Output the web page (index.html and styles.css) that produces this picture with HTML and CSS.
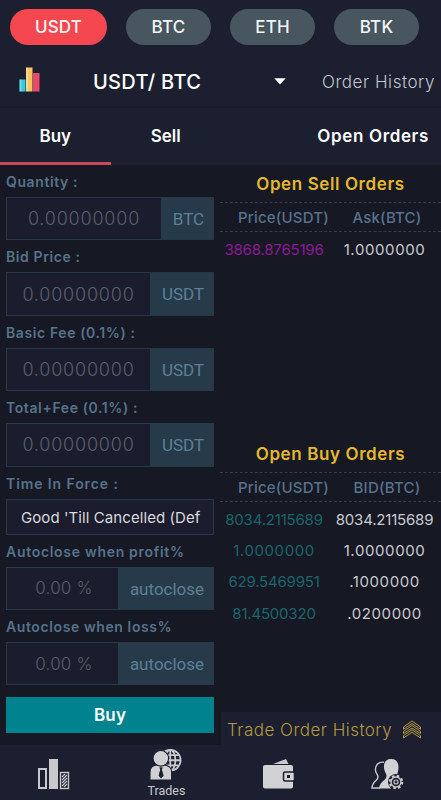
FILE: index.html
```
<!DOCTYPE html>
<html lang="en">
<head>
    <meta charset="UTF-8">
    <meta name="viewport" content="width=device-width, initial-scale=1.0">
    <title>Trade USDT/BTC</title>
    <link rel="stylesheet" href="styles.css">
</head>
<body>
    <header class="top">
        <div class="coins">
            <button class="coin active">USDT</button>
            <button class="coin">BTC</button>
            <button class="coin">ETH</button>
            <button class="coin">BTK</button>
        </div>
        <div class="pair-bar">
            <svg class="chart-icon" width="22" height="25" viewBox="0 0 22 25">
                <rect x="0.5" y="12.5" width="6" height="12" fill="#35cbe4"/>
                <rect x="7" y="0.5" width="6.5" height="24" fill="#f8c561"/>
                <rect x="14" y="6" width="6.5" height="18.5" fill="#e84a6c"/>
                <path d="M0.5 12.5h2v12h-2zM7 .5h2v24H7z" fill="#fff" opacity=".3"/>
            </svg>
            <span class="pair">USDT/ BTC</span>
            <svg class="caret" width="12" height="7" viewBox="0 0 12 7"><path d="M0.3 0.3h11.4L6 6.5z" fill="#fff"/></svg>
            <a class="history-link">Order History</a>
        </div>
    </header>

    <nav class="tabs">
        <a class="tab active">Buy</a>
        <a class="tab">Sell</a>
        <a class="tab-orders">Open Orders</a>
    </nav>

    <main class="content">
        <form class="trade-form">
            <label for="quantity">Quantity :</label>
            <div class="field">
                <input type="text" id="quantity" placeholder="0.00000000">
                <span class="unit unit-btc">BTC</span>
            </div>

            <label for="bidPrice">Bid Price :</label>
            <div class="field">
                <input type="text" id="bidPrice" placeholder="0.00000000">
                <span class="unit">USDT</span>
            </div>

            <label for="basicFee">Basic Fee (0.1%) :</label>
            <div class="field">
                <input type="text" id="basicFee" placeholder="0.00000000">
                <span class="unit">USDT</span>
            </div>

            <label for="totalFee">Total+Fee (0.1%) :</label>
            <div class="field">
                <input type="text" id="totalFee" placeholder="0.00000000">
                <span class="unit">USDT</span>
            </div>

            <label class="wide">Time In Force :</label>
            <div class="select">Good 'Till Cancelled (Def</div>

            <label class="auto" for="profit">Autoclose when profit%</label>
            <div class="field percent">
                <input type="text" id="profit" placeholder="0.00 %">
                <span class="unit unit-auto">autoclose</span>
            </div>

            <label for="loss">Autoclose when loss%</label>
            <div class="field percent">
                <input type="text" id="loss" placeholder="0.00 %">
                <span class="unit unit-auto">autoclose</span>
            </div>

            <button type="button" class="buy-btn">Buy</button>
        </form>

        <section class="orders">
            <div class="book sell-book">
                <h2>Open Sell Orders</h2>
                <div class="row head"><span>Price(USDT)</span><span>Ask(BTC)</span></div>
                <div class="row"><span class="price">3868.8765196</span><span class="round">1.0000000</span></div>
            </div>
            <div class="book buy-book">
                <h2>Open Buy Orders</h2>
                <div class="row head"><span>Price(USDT)</span><span>BID(BTC)</span></div>
                <div class="row"><span class="price">8034.2115689</span><span>8034.2115689</span></div>
                <div class="row"><span class="price round">1.0000000</span><span class="round">1.0000000</span></div>
                <div class="row"><span class="price">629.5469951</span><span class="round">.1000000</span></div>
                <div class="row"><span class="price">81.4500320</span><span class="round">.0200000</span></div>
            </div>
            <div class="trade-history">
                <span>Trade Order History</span>
                <svg width="20" height="20" viewBox="0 0 20 20" fill="none" stroke="#b59a3e">
                    <path d="M1.5 9.2V7L10 1l8.5 6v2.2L10 3.5z"/>
                    <path d="M1.5 13.5v-2.2L10 5.5l8.5 5.8v2.2L10 8z"/>
                    <path d="M1.5 18v-2.4L10 9.8l8.5 5.8V18L10 12.2z"/>
                </svg>
            </div>
        </section>
    </main>

    <footer class="bottom-nav">
        <a class="nav-item chart">
            <svg width="33" height="32" viewBox="0 0 33 32">
                <rect x="2" y="11" width="7" height="19" fill="none" stroke="#c9c9cd" stroke-width="2"/>
                <rect x="12" y="1" width="9" height="30" fill="#c9c9cd"/>
                <rect x="23.5" y="14.5" width="8" height="16" fill="none" stroke="#c9c9cd" stroke-width="1.4"/>
                <path d="M25 19l3-3M25 22l5-5M25 25l5-5M25 28l5-5M27 29l3-3" stroke="#c9c9cd" stroke-width="1.2"/>
            </svg>
        </a>
        <a class="nav-item trades">
            <svg width="32" height="32" viewBox="0 0 34 33">
                <g fill="none" stroke="#c9c9cd" stroke-width="1.9">
                    <circle cx="21.5" cy="12.5" r="11"/>
                    <ellipse cx="21.5" cy="12.5" rx="5.5" ry="11"/>
                    <path d="M21.5 1.5v22M10.5 12.5h22M12.5 7h18M12.5 18h18"/>
                </g>
                <g fill="#d0d0d4" stroke="#1c1f30" stroke-width="1.2">
                    <path d="M0 33.5V25c0-5 3-7 7-7.5h8c4 .5 8 2.5 8 7.5v8.500z"/>
                    <circle cx="11.5" cy="10.5" r="8.3"/>
                </g>
                <path d="M10 20h3.500l-.8 2.500 1.800 6.500-2.700 3-2.700-3 1.700-6.500z" fill="#1c1f30"/>
            </svg>
            <span>Trades</span>
        </a>
        <a class="nav-item wallet">
            <svg width="33" height="31" viewBox="0 0 33 31">
                <path d="M11 6l13-5 2.5 5z" fill="#c9c9cd"/>
                <rect x="1" y="7" width="30" height="23.5" rx="2" fill="#d2d2d5"/>
                <rect x="21.5" y="14" width="11" height="9" rx="1.5" fill="#d2d2d5" stroke="#1c1f30" stroke-width="1.5"/>
                <rect x="25" y="17" width="3" height="3" fill="#1c1f30"/>
            </svg>
        </a>
        <a class="nav-item account">
            <svg width="33" height="32" viewBox="0 0 33 32">
                <path d="M13 4.2C7 3.5 4 7.5 4.5 12.5c.3 3 2.5 4 2.5 6.500C7 23.500 1.500 22 1 30h8" fill="none" stroke="#c9c9cd" stroke-width="1.4"/>
                <path d="M20 1c-5.500 0-7.500 4-7 9 .4 4 2.500 5 2.500 8 0 5-6.500 4-7.500 12.500h12l6-11c0-5 1.500-6 1.500-10C27.500 4.500 25.500 1 20 1z" fill="#d2d2d5"/>
                <circle cx="25" cy="24" r="8" fill="#1c1f30"/>
                <circle cx="25" cy="24" r="6" fill="none" stroke="#c9c9cd" stroke-width="2.6" stroke-dasharray="2.4 2.312"/>
                <circle cx="25" cy="24" r="5" fill="#1c1f30" stroke="#c9c9cd" stroke-width="1.4"/>
                <circle cx="25" cy="24" r="2" fill="none" stroke="#c9c9cd" stroke-width="1.2"/>
            </svg>
        </a>
    </footer>
</body>
</html>
```
FILE: styles.css
```
* {
  box-sizing: border-box;
}

body {
  margin: 0;
  height: 800px;
  display: flex;
  flex-direction: column;
  overflow: hidden;
  background: #161824;
  color: #fff;
  font-family: Inter, "Liberation Sans", sans-serif;
}

button, input {
  font-family: inherit;
  border: none;
}

/* Header */
.top {
  height: 108px;
  background: #1c1f30;
  border-bottom: 2px solid #171927;
}

.coins {
  display: flex;
  gap: 19px;
  padding: 9px 10px 0;
}

.coin {
  width: 85px;
  height: 36px;
  padding: 0;
  border-radius: 18px;
  background: #485660;
  color: #f2f5f6;
  font-size: 17px;
  font-weight: 500;
  letter-spacing: 0.2px;
}

.coin.active {
  width: 97px;
  background: #f4474f;
}

.pair-bar {
  display: flex;
  align-items: center;
  height: 62px;
  padding: 11px 6px 0 19px;
}

.chart-icon {
  margin-top: -4px;
}

.pair {
  width: 181px;
  margin-left: 52px;
  font-size: 20px;
  font-weight: 500;
  letter-spacing: 0.3px;
}

.history-link {
  margin-left: auto;
  color: #c3c5cd;
  font-size: 17px;
  font-weight: 300;
  letter-spacing: 0.55px;
}

/* Tabs */
.tabs {
  display: flex;
  height: 57px;
  background: #1c1f30;
  font-size: 17px;
  font-weight: 600;
  line-height: 57px;
}

.tab {
  width: 110.5px;
  text-align: center;
}

.tab.active {
  border-bottom: 3px solid #c84b5c;
}

.tab-orders {
  margin-left: auto;
  padding-right: 12px;
  letter-spacing: 0.65px;
}

/* Form */
.content {
  display: flex;
  height: 580px;
}

.trade-form {
  width: 220px;
  padding: 0 6px;
}

.trade-form label {
  display: block;
  height: 32px;
  color: #56738c;
  font-size: 14px;
  font-weight: 600;
  line-height: 33px;
  letter-spacing: 0.6px;
  white-space: nowrap;
}

.trade-form label.wide {
  letter-spacing: 0.9px;
}

.trade-form label.auto {
  letter-spacing: 0.7px;
}

.field {
  display: flex;
  height: 43.4px;
  border: 1px solid #263845;
  background: #1b1d2e;
}

.field input {
  flex: 1;
  min-width: 0;
  padding: 0;
  background: none;
  font-size: 18px;
  font-weight: 300;
  letter-spacing: 0.8px;
  text-align: center;
}

.field input::placeholder {
  color: #5a5d6a;
}

.field.percent input {
  padding-left: 3px;
  font-size: 17px;
  letter-spacing: 0.2px;
}

.unit {
  width: 63px;
  padding-left: 3px;
  background: #273a49;
  color: #5c8098;
  font-family: Roboto, sans-serif;
  font-size: 17px;
  line-height: 43px;
  text-align: center;
}

.unit-btc {
  width: 52px;
}

.unit-auto {
  width: 95px;
}

.select {
  height: 36px;
  padding-left: 14px;
  border: 1px solid #263845;
  background: #1b1d2e;
  color: #d8dade;
  font-size: 15px;
  line-height: 36px;
  letter-spacing: 0.08px;
  white-space: nowrap;
}

.buy-btn {
  display: block;
  width: 208px;
  height: 36px;
  margin-top: 12px;
  background: #00838f;
  color: #fff;
  font-size: 17px;
  font-weight: 600;
  letter-spacing: 0.2px;
}

/* Order books */
.orders {
  display: flex;
  flex: 1;
  flex-direction: column;
}

.book {
  height: 270px;
}

.book h2 {
  height: 37px;
  margin: 0;
  color: #e4b92f;
  font-size: 17px;
  font-weight: 600;
  line-height: 38px;
  letter-spacing: 0.6px;
  text-align: center;
}

.row {
  display: grid;
  grid-template-columns: 108px 1fr;
  height: 31.2px;
  color: #c9cbd0;
  font-size: 15px;
  line-height: 32px;
  letter-spacing: -0.2px;
  text-align: center;
}

.row.head {
  grid-template-columns: 127px 80px;
  height: 30px;
  margin-bottom: 2px;
  border-top: 1px dashed #383a48;
  border-bottom: 1px dashed #383a48;
  color: #56738c;
  font-weight: 500;
  line-height: 29px;
  letter-spacing: 0.2px;
}

.round {
  letter-spacing: 0.6px;
}

.sell-book .price {
  color: #8e1a97;
}

.buy-book {
  height: 277px;
}

.buy-book .price {
  color: #1a666b;
}

.trade-history {
  display: flex;
  align-items: center;
  justify-content: space-between;
  height: 33px;
  margin-left: 1px;
  padding: 2px 19px 0 6px;
  background: #1c1f30;
  color: #b59a3e;
  font-size: 17px;
  font-weight: 300;
  letter-spacing: 0.48px;
}

/* Bottom navigation */
.bottom-nav {
  display: grid;
  grid-template-columns: repeat(4, 1fr);
  height: 55px;
  background: #1c1f30;
}

.nav-item {
  display: flex;
  flex-direction: column;
  align-items: center;
  padding-top: 13px;
}

.chart {
  padding-right: 3px;
}

.trades {
  padding-top: 3px;
  padding-left: 2px;
  color: #c9c9cd;
  font: 12.5px/22px Roboto, sans-serif;
}

.wallet {
  padding-left: 6px;
}

.account {
  padding-left: 3px;
}
```
